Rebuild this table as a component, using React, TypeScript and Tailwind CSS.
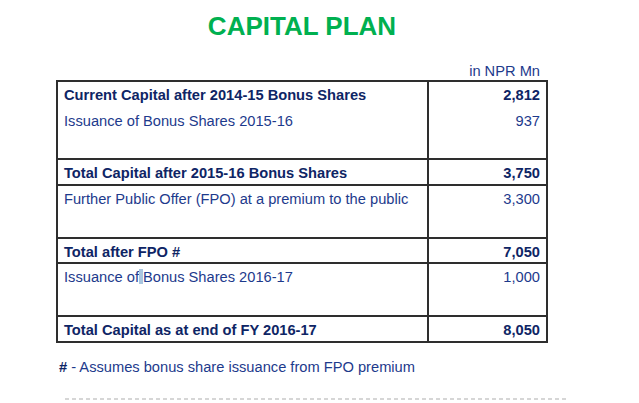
import React from "react";

type Row = {
  lines: { label: React.ReactNode; value?: string; bold?: boolean }[];
  h: string;
};

const rows: Row[] = [
  {
    h: "h-[76px]",
    lines: [
      { label: "Current Capital after 2014-15 Bonus Shares", value: "2,812", bold: true },
      { label: "Issuance of Bonus Shares 2015-16", value: "937" },
    ],
  },
  {
    h: "h-[24px]",
    lines: [{ label: "Total Capital after 2015-16 Bonus Shares", value: "3,750", bold: true }],
  },
  {
    h: "h-[51px]",
    lines: [{ label: "Further Public Offer (FPO) at a premium to the public", value: "3,300" }],
  },
  {
    h: "h-[23px]",
    lines: [{ label: "Total after FPO #", value: "7,050", bold: true }],
  },
  {
    h: "h-[51px]",
    lines: [
      {
        label: (
          <>
            Issuance of
            <span className="inline-block w-[4px] h-[15px] bg-[#a9c6e0] align-[-2px]" />
            Bonus Shares 2016-17
          </>
        ),
        value: "1,000",
      },
    ],
  },
  {
    h: "h-[24px]",
    lines: [{ label: "Total Capital as at end of FY 2016-17", value: "8,050", bold: true }],
  },
];

function Line({ bold, children, right }: { bold?: boolean; children: React.ReactNode; right?: boolean }) {
  return (
    <div
      className={
        "leading-[26px] whitespace-nowrap " +
        (right ? "text-right " : "") +
        (bold ? "font-bold text-[#0e2565]" : "text-[#1d3a8c]")
      }
    >
      {children}
    </div>
  );
}

export default function App() {
  return (
    <div className="w-[639px] h-[403px] bg-white overflow-hidden font-['Liberation_Sans',Arial,sans-serif] text-[14.67px]">
      <h1 className="mt-[11px] w-[604px] text-center text-[26px] leading-[30px] font-bold text-[#00b050]">
        CAPITAL PLAN
      </h1>

      <div className="mt-[22px] w-[540px] text-right leading-[16px] text-[#1d3a8c]">in NPR Mn</div>

      <div className="mt-px ml-[56px] w-[492px] border-2 border-[#2e2e2e]">
        {rows.map((r, i) => (
          <div
            key={i}
            className={"flex " + (i < rows.length - 1 ? "border-b-2 border-[#2e2e2e]" : "")}
          >
            <div className={"w-[371px] pl-[6px] border-r-2 border-[#2e2e2e] " + r.h}>
              {r.lines.map((l, j) => (
                <Line key={j} bold={l.bold}>
                  {l.label}
                </Line>
              ))}
            </div>
            <div className={"flex-1 pr-[6px] " + r.h}>
              {r.lines.map((l, j) => (
                <Line key={j} bold={l.bold} right>
                  {l.value}
                </Line>
              ))}
            </div>
          </div>
        ))}
      </div>

      <div className="mt-[14px] pl-[59px] leading-[20px] text-[#1d3a8c]">
        <span className="font-bold text-[#0e2565]">#</span> - Assumes bonus share issuance from FPO premium
      </div>

      <div className="mt-[21px] ml-[65px] w-[501px] h-[2px] bg-[repeating-linear-gradient(90deg,#d6d6d6_0_4px,transparent_4px_7px)]" />
    </div>
  );
}
